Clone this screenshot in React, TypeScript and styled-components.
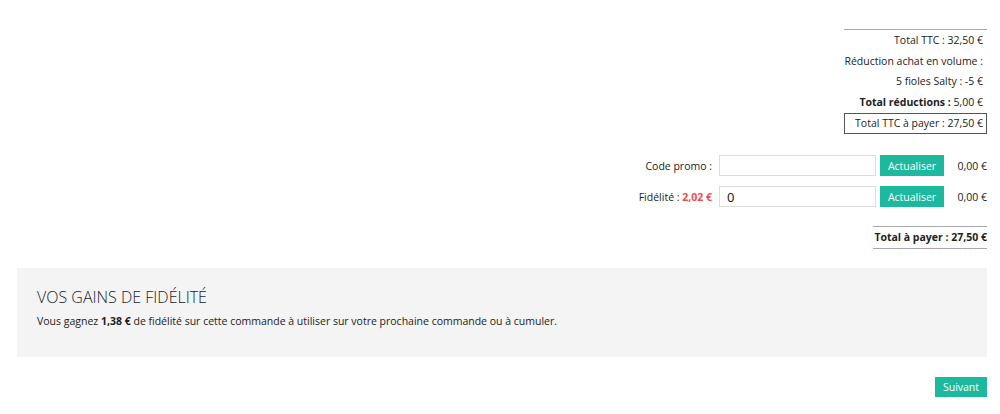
import React from "react";
import styled, { createGlobalStyle } from "styled-components";

const FONT = `"Open Sans", "Liberation Sans", sans-serif`;

const Global = createGlobalStyle`
  html, body { margin: 0; padding: 0; background: #fff; }
  body { font-family: ${FONT}; color: #222; font-size: 10.5px; }
  * { box-sizing: border-box; }
`;

const Page = styled.div`
  width: 970px;
  margin-left: 17px;
  padding-top: 29px;
  display: flex;
  flex-direction: column;
  align-items: flex-end;
`;

const Summary = styled.div`
  width: 143px;
  border-top: 1px solid #a8a8a8;
  display: flex;
  flex-direction: column;
`;

const SummaryRow = styled.div<{ $boxed?: boolean }>`
  text-align: right;
  line-height: 20.5px;
  padding-right: 4px;
  white-space: nowrap;
  ${(p) =>
    p.$boxed
      ? "border: 1px solid #555; margin-top: 1px; line-height: 19px; padding-right: 3px;"
      : ""}
`;

const Bold = styled.b`
  font-weight: 700;
`;

const Form = styled.div`
  margin-top: 21px;
  display: grid;
  grid-template-columns: auto 157px 68px 43px;
  grid-auto-rows: 21px;
  row-gap: 10px;
  align-items: center;
`;

const Label = styled.span`
  justify-self: end;
  margin-right: 7px;
  white-space: nowrap;
`;

const Red = styled.b`
  color: #ef4b4b;
  font-weight: 700;
`;

const Input = styled.input`
  width: 157px;
  height: 21px;
  border: 1px solid #dcdcdc;
  padding: 0 7px;
  font-family: ${FONT};
  font-size: 13px;
  color: #111;
  outline: none;
`;

const GreenButton = styled.button`
  height: 21px;
  background: #1cb99e;
  border: none;
  color: #fff;
  font-family: ${FONT};
  font-size: 10.5px;
  padding: 0;
  cursor: pointer;
`;

const UpdateButton = styled(GreenButton)`
  width: 64px;
  justify-self: end;
`;

const Amount = styled.span`
  text-align: right;
  white-space: nowrap;
`;

const Total = styled.div`
  margin-top: 19px;
  width: 114px;
  border-top: 1px solid #a8a8a8;
  border-bottom: 1px solid #a8a8a8;
  line-height: 21px;
  text-align: right;
  font-weight: 700;
  white-space: nowrap;
`;

const GainsBox = styled.section`
  align-self: stretch;
  margin-top: 19px;
  background: #f4f4f4;
  height: 89px;
  padding: 20px 20px 0 20px;
`;

const GainsTitle = styled.h2`
  margin: 0;
  font-size: 16px;
  font-weight: 300;
  line-height: 18px;
  color: #222;
`;

const GainsText = styled.p`
  margin: 7px 0 0;
  font-size: 10.5px;
  line-height: 16px;
`;

const NextButton = styled(GreenButton)`
  margin-top: 20px;
  width: 52px;
  height: 20px;
`;

export default function App() {
  return (
    <>
      <Global />
      <Page>
        <Summary>
          <SummaryRow>Total TTC : 32,50 €</SummaryRow>
          <SummaryRow>Réduction achat en volume :</SummaryRow>
          <SummaryRow>5 fioles Salty : -5 €</SummaryRow>
          <SummaryRow>
            <Bold>Total réductions :</Bold> 5,00 €
          </SummaryRow>
          <SummaryRow $boxed>Total TTC à payer : 27,50 €</SummaryRow>
        </Summary>
        <Form>
          <Label>Code promo :</Label>
          <Input defaultValue="" />
          <UpdateButton>Actualiser</UpdateButton>
          <Amount>0,00 €</Amount>
          <Label>
            Fidélité : <Red>2,02 €</Red>
          </Label>
          <Input defaultValue="0" />
          <UpdateButton>Actualiser</UpdateButton>
          <Amount>0,00 €</Amount>
        </Form>
        <Total>Total à payer : 27,50 €</Total>
        <GainsBox>
          <GainsTitle>VOS GAINS DE FIDÉLITÉ</GainsTitle>
          <GainsText>
            Vous gagnez <Bold>1,38 €</Bold> de fidélité sur cette commande à utiliser sur votre
            prochaine commande ou à cumuler.
          </GainsText>
        </GainsBox>
        <NextButton>Suivant</NextButton>
      </Page>
    </>
  );
}
